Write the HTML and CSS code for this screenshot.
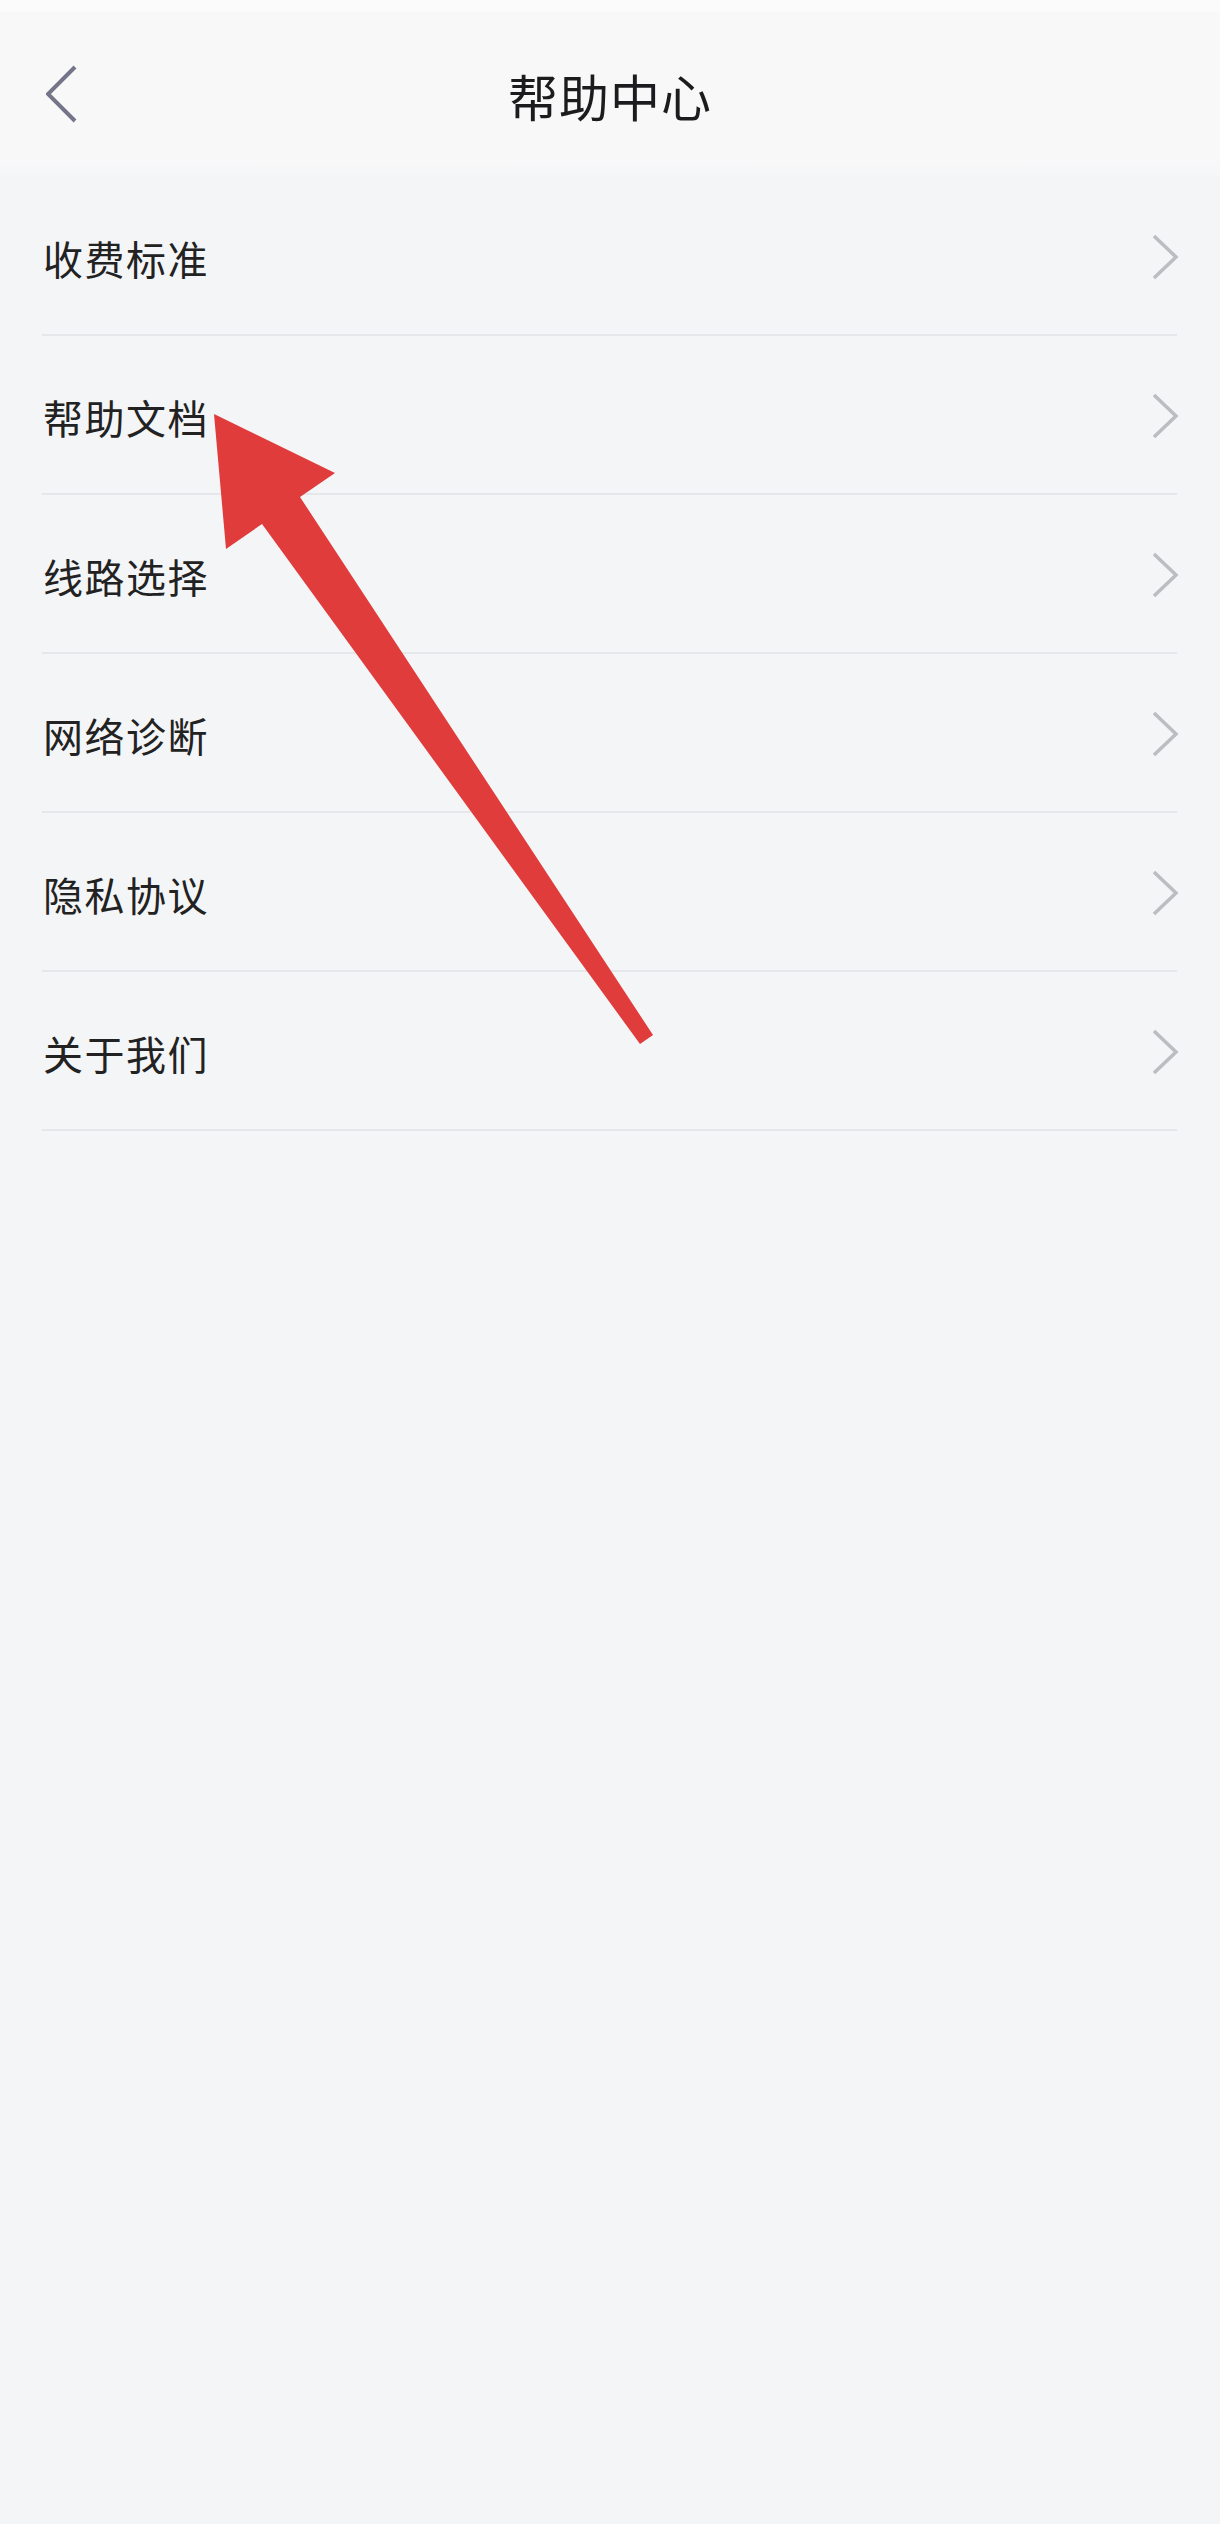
FILE: index.html
```html
<!DOCTYPE html>
<html lang="zh-CN">
<head>
  <meta charset="UTF-8" />
  <title>帮助中心</title>
  <link rel="stylesheet" href="styles.css">
</head>
<body>
  <div class="status-bar"></div>
  <header class="top-bar">
    <a class="back" href="#">
      <svg width="32" height="58" viewBox="0 0 32 58"><polyline points="29,2 2,29 29,56" fill="none" stroke="#74748a" stroke-width="4" stroke-linejoin="miter"/></svg>
    </a>
    <h1>帮助中心</h1>
  </header>

  <ul class="menu">
    <li><a href="#"><span>收费标准</span><svg class="arrow-right" width="28" height="46" viewBox="0 0 28 46"><polyline points="3,2 25,23 3,44" fill="none" stroke="#bcbcc1" stroke-width="3.5"/></svg></a></li>
    <li><a href="#"><span>帮助文档</span><svg class="arrow-right" width="28" height="46" viewBox="0 0 28 46"><polyline points="3,2 25,23 3,44" fill="none" stroke="#bcbcc1" stroke-width="3.5"/></svg></a></li>
    <li><a href="#"><span>线路选择</span><svg class="arrow-right" width="28" height="46" viewBox="0 0 28 46"><polyline points="3,2 25,23 3,44" fill="none" stroke="#bcbcc1" stroke-width="3.5"/></svg></a></li>
    <li><a href="#"><span>网络诊断</span><svg class="arrow-right" width="28" height="46" viewBox="0 0 28 46"><polyline points="3,2 25,23 3,44" fill="none" stroke="#bcbcc1" stroke-width="3.5"/></svg></a></li>
    <li><a href="#"><span>隐私协议</span><svg class="arrow-right" width="28" height="46" viewBox="0 0 28 46"><polyline points="3,2 25,23 3,44" fill="none" stroke="#bcbcc1" stroke-width="3.5"/></svg></a></li>
    <li><a href="#"><span>关于我们</span><svg class="arrow-right" width="28" height="46" viewBox="0 0 28 46"><polyline points="3,2 25,23 3,44" fill="none" stroke="#bcbcc1" stroke-width="3.5"/></svg></a></li>
  </ul>

  <svg class="pointer" width="1220" height="2524" viewBox="0 0 1220 2524">
    <polygon points="214,414 335,473 300,497 653,1035 640,1044 262,524 226,549" fill="#e03c3b"/>
  </svg>
</body>
</html>
```

FILE: styles.css
```css
body {
  font-family: "Noto Sans CJK SC", "Noto Sans", sans-serif;
  margin: 0;
  background: #f4f5f7;
  color: #222;
  min-height: 2524px;
  position: relative;
}
.status-bar {
  height: 12px;
  background: #fbfbfc;
}
.top-bar {
  height: 165px;
  background: linear-gradient(#f8f8f9 0, #f8f8f9 150px, #f5f6f8 165px);
  display: flex;
  align-items: center;
  justify-content: center;
  position: relative;
}
.top-bar h1 {
  margin: 0;
  font-size: 50px;
  font-weight: normal;
  color: #1c1c1e;
  letter-spacing: 1px;
}
.back {
  position: absolute;
  left: 46px;
  top: 53px;
  display: block;
  line-height: 0;
}
.menu {
  list-style: none;
  margin: 0;
  padding: 0 43px 0 42px;
}
.menu li a {
  height: 159px;
  box-sizing: border-box;
  border-bottom: 2px solid #e6e7ea;
  display: flex;
  align-items: center;
  justify-content: space-between;
  text-decoration: none;
  color: #222;
  font-size: 40px;
  letter-spacing: 1.5px;
}
.menu li a span {
  padding-left: 1px;
  margin-top: 4px;
}
.arrow-right {
  margin-right: -2px;
  margin-top: 2px;
}
.pointer {
  position: absolute;
  left: 0;
  top: 0;
  pointer-events: none;
}
```
